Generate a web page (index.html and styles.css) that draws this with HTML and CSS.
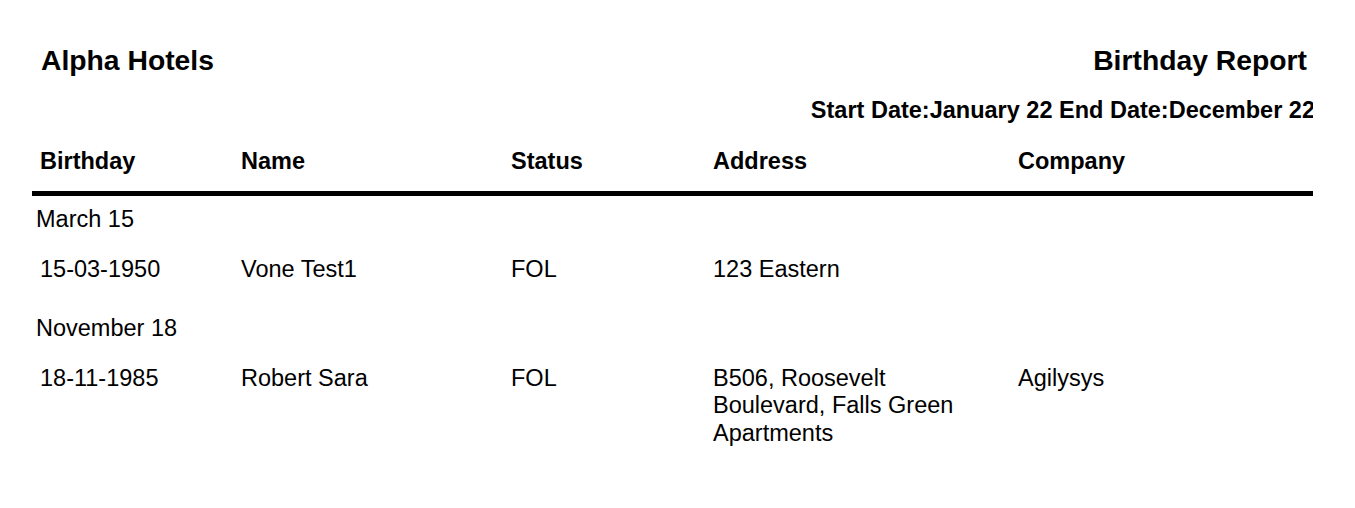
FILE: index.html
```html
<!DOCTYPE html>
<html lang="en">
<head>
<meta charset="utf-8">
<title>Birthday Report</title>
<link rel="stylesheet" href="styles.css">
</head>
<body>
<div class="page">
  <div class="title-row">
    <div class="hotel">Alpha Hotels</div>
    <div class="report">Birthday Report</div>
  </div>
  <div class="date-clip">
    <div class="date-line">Start Date:January 22 End Date:December 22</div>
  </div>
  <div class="grid head">
    <div class="cell">Birthday</div>
    <div class="cell">Name</div>
    <div class="cell">Status</div>
    <div class="cell">Address</div>
    <div class="cell">Company</div>
  </div>
  <div class="group">
    <div class="group-label">March 15</div>
    <div class="grid row">
      <div class="cell">15-03-1950</div>
      <div class="cell">Vone Test1</div>
      <div class="cell">FOL</div>
      <div class="cell addr">123 Eastern</div>
      <div class="cell"></div>
    </div>
  </div>
  <div class="group">
    <div class="group-label">November 18</div>
    <div class="grid row">
      <div class="cell">18-11-1985</div>
      <div class="cell">Robert Sara</div>
      <div class="cell">FOL</div>
      <div class="cell addr">B506, Roosevelt Boulevard, Falls Green Apartments</div>
      <div class="cell">Agilysys</div>
    </div>
  </div>
</div>
</body>
</html>
```
FILE: styles.css
```css
html, body {
  margin: 0;
  padding: 0;
  background: #ffffff;
}
body {
  font-family: "Liberation Sans", Arial, sans-serif;
  color: #000000;
  font-size: 23.5px;
  line-height: 26.5px;
}
.page {
  padding: 43px 42px 0 32px;
}
.title-row {
  display: flex;
  justify-content: space-between;
  padding: 0 6px 0 9px;
  font-size: 28.3px;
  line-height: 34px;
  font-weight: bold;
}
.date-clip {
  overflow: hidden;
  margin-top: 20px;
}
.date-line {
  font-weight: bold;
  white-space: nowrap;
  text-align: right;
  line-height: 27px;
  margin-right: -2px;
}
.grid {
  display: grid;
  grid-template-columns: 201px 270px 202px 305px 1fr;
  padding-left: 8px;
}
.head {
  margin-top: 24px;
  padding-bottom: 16px;
  border-bottom: 5px solid #000000;
  font-weight: bold;
  line-height: 27px;
}
.cell.addr {
  padding-right: 40px;
}
.group {
  padding-top: 10px;
}
.group-label {
  padding-left: 4px;
  margin-bottom: 23px;
}
.row {
  line-height: 27.5px;
  padding-bottom: 22px;
}
```
